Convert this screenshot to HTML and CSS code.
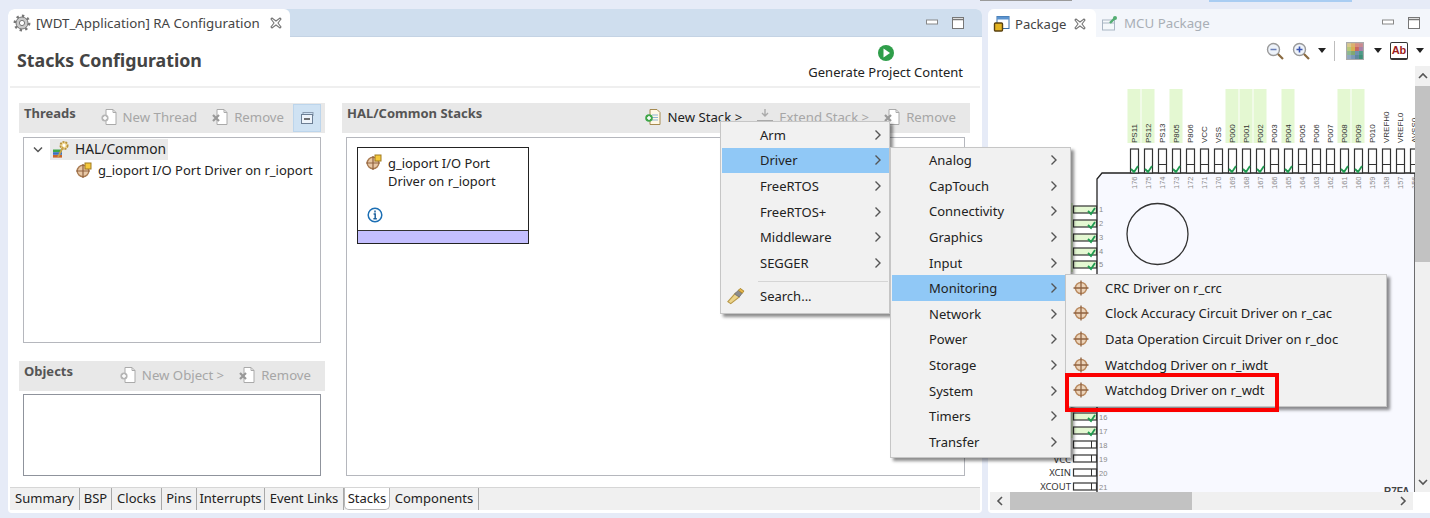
FILE: index.html
```html
<!DOCTYPE html>
<html lang="en">
<head>
<meta charset="utf-8">
<title>RA Configuration</title>
<link rel="stylesheet" href="styles.css">
</head>
<body>
<svg class="defs" width="0" height="0">
  <symbol id="gear" viewBox="0 0 18 18"><circle cx="9" cy="9" r="6" fill="#c9c9c9" stroke="#777" stroke-width="1"/><circle cx="9" cy="9" r="7.2" fill="none" stroke="#777" stroke-width="2.4" stroke-dasharray="2.4 3.2"/><circle cx="9" cy="9" r="2.6" fill="#fff" stroke="#777"/></symbol>
  <symbol id="close" viewBox="0 0 14 14"><path d="M2 3l1-1 4 3 4-3 1 1-3 4 3 4-1 1-4-3-4 3-1-1 3-4z" fill="#fff" stroke="#777" stroke-width="1.1"/></symbol>
  <symbol id="min" viewBox="0 0 14 14"><rect x="1.5" y="4" width="11" height="4" fill="#fff" stroke="#888"/></symbol>
  <symbol id="max" viewBox="0 0 14 14"><rect x="1.5" y="1.5" width="11" height="11" fill="#fff" stroke="#777"/><path d="M1.5 3.500h11" stroke="#777" stroke-width="1.5"/></symbol>
  <symbol id="driver" viewBox="0 0 16 16"><circle cx="8" cy="8" r="5.600" fill="#ecd4ba" stroke="#b98a60" stroke-width="1.500"/><path d="M8 0.500v15M0.500 8h15" stroke="#8f6240" stroke-width="1.300"/></symbol>
  <symbol id="driverq" viewBox="0 0 16 16"><circle cx="7" cy="9" r="5.800" fill="#e8c8a6" stroke="#a87a50" stroke-width="1.400"/><path d="M7 2v14M0 9h14" stroke="#8f6240" stroke-width="1.200"/><rect x="9" y="1" width="6" height="6" fill="#f5c93c" stroke="#a07a20"/></symbol>
  <symbol id="addpage" viewBox="0 0 18 18"><path d="M6 1.500h7l3 3v12H6z" fill="#fff" stroke="#aaa"/><path d="M13 1.500v3h3" fill="none" stroke="#aaa"/><circle cx="5" cy="10" r="3.600" fill="#b5b5b5"/><path d="M5 8v4M3 10h4" stroke="#fff" stroke-width="1.400"/></symbol>
  <symbol id="addpagec" viewBox="0 0 18 18"><path d="M6 1.500h7l3 3v12H6z" fill="#fff8e6" stroke="#a58a50"/><path d="M8 7h6M8 9.500h6M8 12h6" stroke="#8fb4d6"/><circle cx="5" cy="10" r="3.800" fill="#3fa648"/><path d="M5 8v4M3 10h4" stroke="#fff" stroke-width="1.500"/></symbol>
  <symbol id="rmpage" viewBox="0 0 18 18"><path d="M6 1.500h7l3 3v12H6z" fill="#fff" stroke="#aaa"/><path d="M13 1.500v3h3" fill="none" stroke="#aaa"/><path d="M2 7l6 6M8 7l-6 6" stroke="#999" stroke-width="2.200"/></symbol>
  <symbol id="extend" viewBox="0 0 18 18"><path d="M9 1v7M6 5l3 3 3-3" fill="none" stroke="#aaa" stroke-width="1.400"/><path d="M1 13h16" stroke="#aaa" stroke-width="2"/></symbol>
  <symbol id="chev" viewBox="0 0 8 12"><path d="M1.500 1.500L6 6l-4.500 4.500" fill="none" stroke="#555" stroke-width="1.400"/></symbol>
  <symbol id="mag" viewBox="0 0 18 18"><circle cx="7.500" cy="7.500" r="6" fill="#eef3fa" stroke="#9a9a9a" stroke-width="1.400"/><path d="M12 12l5 5" stroke="#8a6a40" stroke-width="2.200"/></symbol>
</svg>

<main class="editor">
  <div class="tabbar">
    <div class="tab tab-active">
      <svg class="i18"><use href="#gear"/></svg>
      <span>[WDT_Application] RA Configuration</span>
      <svg class="i14"><use href="#close"/></svg>
    </div>
    <div class="winbtns">
      <svg class="i14"><use href="#min"/></svg>
      <svg class="i14"><use href="#max"/></svg>
    </div>
  </div>

  <header class="head">
    <h1>Stacks Configuration</h1>
    <div class="generate">
      <svg class="i18" viewBox="0 0 18 18"><circle cx="9" cy="9" r="8" fill="#2f9e4a"/><path d="M6.500 4.500l6.500 4.500-6.500 4.500z" fill="#fff"/></svg>
      <span>Generate Project Content</span>
    </div>
  </header>

  <div class="work">
    <section class="col-left">
      <div class="bar bar-threads">
        <h2>Threads</h2>
        <div class="btns">
          <span class="btn off"><svg class="i18"><use href="#addpage"/></svg>New Thread</span>
          <span class="btn off"><svg class="i18"><use href="#rmpage"/></svg>Remove</span>
          <span class="collapse"><svg viewBox="0 0 14 14" class="i14"><rect x="3" y="1.500" width="10" height="3" fill="none" stroke="#8a9bb0"/><rect x="1.500" y="3.500" width="11" height="9" fill="#eef4fb" stroke="#6d7f95"/><path d="M4 8h6" stroke="#444" stroke-width="1.400"/></svg></span>
        </div>
      </div>
      <div class="box box-tree">
        <div class="tree-row">
          <svg class="twist" viewBox="0 0 10 8"><path d="M1 1.500l4 4 4-4" fill="none" stroke="#555" stroke-width="1.500"/></svg>
          <span class="tree-sel">
            <svg class="i18" viewBox="0 0 18 18"><rect x="1" y="9.500" width="9" height="2.600" fill="#3fa648"/><rect x="1" y="12.200" width="9" height="2.600" fill="#3a6fc0"/><rect x="1" y="15" width="9" height="2.600" fill="#c9662b"/><circle cx="12" cy="5.500" r="3.600" fill="#f4dc9a" stroke="#b8923a" stroke-width="1.800" stroke-dasharray="2 1"/><circle cx="12" cy="5.500" r="1.400" fill="#fff"/><path d="M6 17L11 7" stroke="#c9a24a" stroke-width="1.700"/></svg>
            HAL/Common
          </span>
        </div>
        <div class="tree-row tree-child">
          <svg class="i16"><use href="#driverq"/></svg>
          <span>g_ioport I/O Port Driver on r_ioport</span>
        </div>
      </div>
      <div class="bar bar-objects">
        <h2>Objects</h2>
        <div class="btns">
          <span class="btn off"><svg class="i18"><use href="#addpage"/></svg>New Object &gt;</span>
          <span class="btn off"><svg class="i18"><use href="#rmpage"/></svg>Remove</span>
        </div>
      </div>
      <div class="box box-objects"></div>
    </section>

    <section class="col-right">
      <div class="bar bar-stacks">
        <h2>HAL/Common Stacks</h2>
        <div class="btns">
          <span class="btn"><svg class="i18"><use href="#addpagec"/></svg>New Stack &gt;</span>
          <span class="btn off"><svg class="i18"><use href="#extend"/></svg>Extend Stack &gt;</span>
          <span class="btn off"><svg class="i18"><use href="#rmpage"/></svg>Remove</span>
        </div>
      </div>
      <div class="box box-stacks">
        <article class="card">
          <div class="card-body">
            <svg class="i16"><use href="#driverq"/></svg>
            <p>g_ioport I/O Port<br>Driver on r_ioport</p>
          </div>
          <svg class="info" viewBox="0 0 16 16"><circle cx="8" cy="8" r="6.800" fill="#fff" stroke="#1c6fb4" stroke-width="1.500"/><path d="M8 3.600v1.800M6.600 7h1.600v4.600M6.400 11.800h3.400" fill="none" stroke="#1c5f9c" stroke-width="1.500"/></svg>
          <div class="card-strip"></div>
        </article>
      </div>
    </section>
  </div>

  <nav class="pagetabs">
    <span class="pt">Summary</span>
    <span class="pt">BSP</span>
    <span class="pt">Clocks</span>
    <span class="pt">Pins</span>
    <span class="pt">Interrupts</span>
    <span class="pt">Event Links</span>
    <span class="pt pt-active">Stacks</span>
    <span class="pt">Components</span>
  </nav>
</main>

<aside class="package">
  <div class="tabbar tabbar-light">
    <div class="tab tab-pkg">
      <svg class="i18" viewBox="0 0 18 18"><rect x="4" y="1.500" width="12" height="12" fill="#fff" stroke="#3a6ea5"/><rect x="4" y="1.500" width="12" height="3" fill="#5b93cf"/><rect x="1.500" y="8" width="8" height="8" rx="1" fill="#e3b321" stroke="#5a4210" stroke-width="1.400"/></svg>
      <span>Package</span>
      <svg class="i14"><use href="#close"/></svg>
    </div>
    <div class="tab-other">
      <svg class="i18" viewBox="0 0 18 18"><rect x="1.500" y="6" width="12" height="10" fill="#f4f8fb" stroke="#a9b6c4"/><path d="M1.500 9h12" stroke="#a9b6c4"/><path d="M9 9l5-5" stroke="#54ad73" stroke-width="2.400"/><circle cx="14" cy="4" r="2" fill="#54ad73"/></svg>
      <span>MCU Package</span>
    </div>
    <div class="winbtns winbtns-pkg">
      <svg class="i14"><use href="#min"/></svg>
      <svg class="i14"><use href="#max"/></svg>
    </div>
  </div>

  <div class="pkg-tools">
    <svg class="i18" viewBox="0 0 18 18"><use href="#mag"/><path d="M4.500 7.500h6" stroke="#6a7fb8" stroke-width="1.600"/></svg>
    <svg class="i18" viewBox="0 0 18 18"><use href="#mag"/><path d="M4.500 7.500h6M7.500 4.500v6" stroke="#3b55b0" stroke-width="1.600"/></svg>
    <span class="caret"></span>
    <span class="tool-sep"></span>
    <svg class="i18 grid-ico" viewBox="0 0 16 16"><rect x="0.500" y="0.500" width="15" height="15" fill="#bbb" stroke="#aaa"/><path fill="#d9c98c" d="M1 1h3.500v3.500H1z"/><path fill="#dcb06c" d="M4.500 1H8v3.500H4.500z"/><path fill="#d88c7c" d="M8 1h3.500v3.500H8z"/><path fill="#c88a90" d="M11.500 1H15v3.500h-3.500z"/><path fill="#b9c878" d="M1 4.500h3.500V8H1z"/><path fill="#d8b050" d="M4.500 4.500H8V8H4.500z"/><path fill="#c86860" d="M8 4.500h3.500V8H8z"/><path fill="#a880a8" d="M11.500 4.500H15V8h-3.500z"/><path fill="#8cb890" d="M1 8h3.500v3.500H1z"/><path fill="#80a870" d="M4.500 8H8v3.500H4.500z"/><path fill="#7090b0" d="M8 8h3.500v3.500H8z"/><path fill="#4f9a88" d="M11.500 8H15v3.500h-3.500z"/><path fill="#90a8c0" d="M1 11.500h3.500V15H1z"/><path fill="#7a98b8" d="M4.500 11.500H8V15H4.500z"/><path fill="#5f88a0" d="M8 11.500h3.500V15H8z"/><path fill="#409078" d="M11.500 11.500H15V15h-3.500z"/></svg>
    <span class="caret"></span>
    <span class="abicon">Ab</span>
    <span class="caret"></span>
  </div>

  <div class="pkg-view">
    <div class="pkg-main">
      <svg class="diagram" viewBox="990 66 425 426" width="425" height="426">
        <g class="col-bg">
          <rect x="1127.500" y="89" width="13" height="54" fill="#e4f8d2"/><rect x="1141.500" y="89" width="13" height="54" fill="#e4f8d2"/><rect x="1169.500" y="89" width="13" height="54" fill="#e4f8d2"/><rect x="1225.500" y="89" width="13" height="54" fill="#e4f8d2"/><rect x="1239.500" y="89" width="13" height="54" fill="#e4f8d2"/><rect x="1253.500" y="89" width="13" height="54" fill="#e4f8d2"/><rect x="1281.500" y="89" width="13" height="54" fill="#e4f8d2"/><rect x="1337.500" y="89" width="13" height="54" fill="#e4f8d2"/><rect x="1351.500" y="89" width="13" height="54" fill="#e4f8d2"/>
        </g>
        <path d="M1097 500V179l5-6h313v327z" fill="#f8f9ff" stroke="#222" stroke-width="1.300"/>
        <g fill="#fff" stroke="#333" stroke-width="1.200">
          <rect x="1130.500" y="149" width="8" height="24"/><rect x="1144.500" y="149" width="8" height="24"/><rect x="1158.500" y="149" width="8" height="24"/><rect x="1172.500" y="149" width="8" height="24"/><rect x="1186.500" y="149" width="8" height="24"/><rect x="1200.500" y="149" width="8" height="24"/><rect x="1214.500" y="149" width="8" height="24"/><rect x="1228.500" y="149" width="8" height="24"/><rect x="1242.500" y="149" width="8" height="24"/><rect x="1256.500" y="149" width="8" height="24"/><rect x="1270.500" y="149" width="8" height="24"/><rect x="1284.500" y="149" width="8" height="24"/><rect x="1298.500" y="149" width="8" height="24"/><rect x="1312.500" y="149" width="8" height="24"/><rect x="1326.500" y="149" width="8" height="24"/><rect x="1340.500" y="149" width="8" height="24"/><rect x="1354.500" y="149" width="8" height="24"/><rect x="1368.500" y="149" width="8" height="24"/><rect x="1382.500" y="149" width="8" height="24"/><rect x="1396.500" y="149" width="8" height="24"/><rect x="1410.500" y="149" width="8" height="24"/>
        </g>
        <path d="M1158.500 164.500h8M1186.500 164.500h8M1200.500 164.500h8M1214.500 164.500h8M1270.500 164.500h8M1298.500 164.500h8M1312.500 164.500h8M1326.500 164.500h8M1368.500 164.500h8M1382.500 164.500h8M1396.500 164.500h8M1410.500 164.500h8" stroke="#333" fill="none"/>
        <path d="M1131 169l3 3 4-6M1145 169l3 3 4-6M1173 169l3 3 4-6M1229 169l3 3 4-6M1243 169l3 3 4-6M1257 169l3 3 4-6M1285 169l3 3 4-6M1341 169l3 3 4-6M1355 169l3 3 4-6" stroke="#1f9a50" stroke-width="1.800" fill="none"/>
        <g class="pin-name">
          <text transform="translate(1136.500 143) rotate(-90)">PS11</text><text transform="translate(1150.500 143) rotate(-90)">PS12</text><text transform="translate(1164.500 143) rotate(-90)">PS13</text><text transform="translate(1178.500 143) rotate(-90)">P805</text><text transform="translate(1192.500 143) rotate(-90)">P806</text><text transform="translate(1206.500 143) rotate(-90)">VCC</text><text transform="translate(1220.500 143) rotate(-90)">VSS</text><text transform="translate(1234.500 143) rotate(-90)">P000</text><text transform="translate(1248.500 143) rotate(-90)">P001</text><text transform="translate(1262.500 143) rotate(-90)">P002</text><text transform="translate(1276.500 143) rotate(-90)">P003</text><text transform="translate(1290.500 143) rotate(-90)">P004</text><text transform="translate(1304.500 143) rotate(-90)">P005</text><text transform="translate(1318.500 143) rotate(-90)">P006</text><text transform="translate(1332.500 143) rotate(-90)">P007</text><text transform="translate(1346.500 143) rotate(-90)">P008</text><text transform="translate(1360.500 143) rotate(-90)">P009</text><text transform="translate(1374.500 143) rotate(-90)">P010</text><text transform="translate(1388.500 143) rotate(-90)">VREFH0</text><text transform="translate(1402.500 143) rotate(-90)">VREFL0</text><text transform="translate(1416.500 143) rotate(-90)">AVSS0</text>
        </g>
        <g class="pin-num">
          <text transform="translate(1136.500 189) rotate(-90)">176</text><text transform="translate(1150.500 189) rotate(-90)">175</text><text transform="translate(1164.500 189) rotate(-90)">174</text><text transform="translate(1178.500 189) rotate(-90)">173</text><text transform="translate(1192.500 189) rotate(-90)">172</text><text transform="translate(1206.500 189) rotate(-90)">171</text><text transform="translate(1220.500 189) rotate(-90)">170</text><text transform="translate(1234.500 189) rotate(-90)">169</text><text transform="translate(1248.500 189) rotate(-90)">168</text><text transform="translate(1262.500 189) rotate(-90)">167</text><text transform="translate(1276.500 189) rotate(-90)">166</text><text transform="translate(1290.500 189) rotate(-90)">165</text><text transform="translate(1304.500 189) rotate(-90)">164</text><text transform="translate(1318.500 189) rotate(-90)">163</text><text transform="translate(1332.500 189) rotate(-90)">162</text><text transform="translate(1346.500 189) rotate(-90)">161</text><text transform="translate(1360.500 189) rotate(-90)">160</text><text transform="translate(1374.500 189) rotate(-90)">159</text><text transform="translate(1388.500 189) rotate(-90)">158</text><text transform="translate(1402.500 189) rotate(-90)">157</text><text transform="translate(1416.500 189) rotate(-90)">156</text>
        </g>
        <circle cx="1157.500" cy="234" r="30.500" fill="none" stroke="#333" stroke-width="1.300"/>
        <g>
          <rect x="1014" y="203" width="59" height="69" fill="#e4f8d2"/><rect x="1014" y="410" width="59" height="28" fill="#e4f8d2"/><rect x="1014" y="438" width="59" height="54" fill="#fff"/>
        </g>
        <g fill="#e4f8d2" stroke="#333" stroke-width="1.200">
          <rect x="1073.500" y="206" width="23" height="7"/><rect x="1073.500" y="220" width="23" height="7"/><rect x="1073.500" y="234" width="23" height="7"/><rect x="1073.500" y="248" width="23" height="7"/><rect x="1073.500" y="261" width="23" height="7"/><rect x="1073.500" y="413" width="23" height="7"/><rect x="1073.500" y="427" width="23" height="7"/>
        </g>
        <g fill="#fff" stroke="#333" stroke-width="1.200">
          <rect x="1073.500" y="441" width="23" height="7"/><rect x="1073.500" y="455" width="23" height="7"/><rect x="1073.500" y="469" width="23" height="7"/><rect x="1073.500" y="483" width="23" height="7"/>
        </g>
        <path d="M1091.500 441v7M1091.500 455v7M1091.500 469v7M1091.500 483v7" stroke="#333"/>
        <path d="M1088 211l3 3 4-6M1088 225l3 3 4-6M1088 239l3 3 4-6M1088 253l3 3 4-6M1088 266l3 3 4-6M1088 418l3 3 4-6M1088 432l3 3 4-6" stroke="#1f9a50" stroke-width="1.800" fill="none"/>
        <g class="pin-num">
          <text x="1099" y="212">1</text><text x="1099" y="226">2</text><text x="1099" y="240">3</text><text x="1099" y="254">4</text><text x="1099" y="267">5</text><text x="1099" y="420">16</text><text x="1099" y="434">17</text><text x="1099" y="448">18</text><text x="1099" y="462">19</text><text x="1099" y="476">20</text><text x="1099" y="490">21</text>
        </g>
        <g class="pin-side">
          <text x="1071" y="463">VCC</text><text x="1071" y="476">XCIN</text><text x="1071" y="490">XCOUT</text>
        </g>
        <text class="chip-name" x="1384" y="495">R7FA</text>
      </svg>
      <div class="vscroll">
        <svg class="sb-arrow" viewBox="0 0 12 8"><path d="M2 6l4-4 4 4" fill="none" stroke="#555" stroke-width="1.600"/></svg>
        <div class="vthumb"></div>
        <svg class="sb-arrow sb-down" viewBox="0 0 12 8"><path d="M2 2l4 4 4-4" fill="none" stroke="#555" stroke-width="1.600"/></svg>
      </div>
    </div>
    <div class="hscroll">
      <svg class="sb-h" viewBox="0 0 8 12"><path d="M6 2L2 6l4 4" fill="none" stroke="#555" stroke-width="1.600"/></svg>
      <div class="hthumb"></div>
      <svg class="sb-h" viewBox="0 0 8 12"><path d="M2 2l4 4-4 4" fill="none" stroke="#555" stroke-width="1.600"/></svg>
    </div>
  </div>
</aside>

<div class="topbits"><span class="tb-line"></span><span class="tb-blue"></span></div>

<div class="menu menu-1">
  <div class="mi">Arm<svg class="chev"><use href="#chev"/></svg></div>
  <div class="mi mi-hot">Driver<svg class="chev"><use href="#chev"/></svg></div>
  <div class="mi">FreeRTOS<svg class="chev"><use href="#chev"/></svg></div>
  <div class="mi">FreeRTOS+<svg class="chev"><use href="#chev"/></svg></div>
  <div class="mi">Middleware<svg class="chev"><use href="#chev"/></svg></div>
  <div class="mi">SEGGER<svg class="chev"><use href="#chev"/></svg></div>
  <div class="msep"></div>
  <div class="mi mi-search"><svg class="mi-ico search-ico" viewBox="0 0 20 18"><path d="M2 15l8-9 4 4-9 7z" fill="#ecd48a" stroke="#b89848" stroke-width="1.200"/><path d="M9 7l4-4 4 3-3 4z" fill="#8c8c8c" stroke="#777"/><path d="M13 3l2-2 4 3-2 2z" fill="#e8b64a" stroke="#a88428"/></svg>Search...</div>
</div>

<div class="menu menu-2">
  <div class="mi">Analog<svg class="chev"><use href="#chev"/></svg></div>
  <div class="mi">CapTouch<svg class="chev"><use href="#chev"/></svg></div>
  <div class="mi">Connectivity<svg class="chev"><use href="#chev"/></svg></div>
  <div class="mi">Graphics<svg class="chev"><use href="#chev"/></svg></div>
  <div class="mi">Input<svg class="chev"><use href="#chev"/></svg></div>
  <div class="mi mi-hot">Monitoring<svg class="chev"><use href="#chev"/></svg></div>
  <div class="mi">Network<svg class="chev"><use href="#chev"/></svg></div>
  <div class="mi">Power<svg class="chev"><use href="#chev"/></svg></div>
  <div class="mi">Storage<svg class="chev"><use href="#chev"/></svg></div>
  <div class="mi">System<svg class="chev"><use href="#chev"/></svg></div>
  <div class="mi">Timers<svg class="chev"><use href="#chev"/></svg></div>
  <div class="mi">Transfer<svg class="chev"><use href="#chev"/></svg></div>
</div>

<div class="menu menu-3">
  <div class="mi"><svg class="mi-ico"><use href="#driver"/></svg>CRC Driver on r_crc</div>
  <div class="mi"><svg class="mi-ico"><use href="#driver"/></svg>Clock Accuracy Circuit Driver on r_cac</div>
  <div class="mi"><svg class="mi-ico"><use href="#driver"/></svg>Data Operation Circuit Driver on r_doc</div>
  <div class="mi"><svg class="mi-ico"><use href="#driver"/></svg>Watchdog Driver on r_iwdt</div>
  <div class="mi"><svg class="mi-ico"><use href="#driver"/></svg>Watchdog Driver on r_wdt</div>
</div>
<div class="redbox"></div>
</body>
</html>
```

FILE: styles.css
```css
* { box-sizing: border-box; }
html, body { margin: 0; height: 100%; }
body {
  position: relative;
  width: 1430px;
  height: 518px;
  overflow: hidden;
  display: flex;
  gap: 6px;
  padding: 9px 0 5px 8px;
  background: #e6ebf7;
  font-family: "Noto Sans", "Open Sans", sans-serif;
  font-size: 13px;
  color: #333;
}
.defs { position: absolute; }
.i18 { width: 18px; height: 18px; flex: none; }
.i16 { width: 16px; height: 16px; flex: none; }
.i14 { width: 14px; height: 14px; flex: none; }

/* editor */
.editor {
  width: 974px;
  display: flex;
  flex-direction: column;
  background: #fff;
  border-radius: 6px 6px 4px 4px;
  overflow: hidden;
}
.tabbar {
  height: 28px;
  flex: none;
  display: flex;
  align-items: stretch;
  background: #cfdeee;
  border-bottom: 1px solid #c4d3e4;
}
.tab {
  display: flex;
  align-items: center;
  background: #fff;
  border-radius: 6px 6px 0 0;
  margin-bottom: -1px;
}
.tab-active { width: 282px; padding-left: 5px; gap: 5px; font-size: 13.3px; color: #444; }
.tab-active span { width: 228px; white-space: nowrap; }
.winbtns { margin-left: auto; display: flex; align-items: center; gap: 12px; padding-right: 17px; }
.head {
  height: 51px;
  flex: none;
  margin: 0 2px;
  padding: 7px 17px 0 7px;
  display: flex;
  justify-content: space-between;
  align-items: flex-start;
  border-bottom: 2px solid #efefef;
}
h1 { margin: 4px 0 0; font-size: 17.8px; font-weight: 700; color: #444; line-height: 24px; }
.generate { display: flex; flex-direction: column; align-items: center; gap: 1px; line-height: 18px; color: #222; font-size: 13px; }
.work {
  flex: 1;
  display: flex;
  gap: 17px;
  padding: 15px 12px 0 11px;
}
.col-left { width: 306px; display: flex; flex-direction: column; }
.col-right { width: 628px; display: flex; flex-direction: column; }
.bar {
  height: 30px;
  flex: none;
  display: flex;
  background: #e8e8e8;
  padding-left: 5px;
}
h2 { margin: 0; font-size: 13px; font-weight: 700; color: #555; line-height: 20px; }
.btns { margin-left: auto; display: flex; align-items: center; padding-bottom: 2px; }
.btn { display: inline-flex; align-items: center; gap: 5px; color: #222; font-size: 13.2px; white-space: nowrap; margin-right: 14px; }
.btn.off { color: #a6a6a6; }
.bar-threads .btns { margin-right: 4px; padding-bottom: 0; }
.bar-threads .btn { position: relative; top: -1px; }
.bar-threads .btn:nth-child(2) { margin-right: 9px; }
.collapse { width: 28px; height: 28px; display: flex; align-items: center; justify-content: center; background: #cfe2f3; border: 1px solid #bcd5ec; }
.box { background: #fff; border: 1px solid #b5b7bd; margin: 4px 4px 0; }
.box-tree { height: 206px; flex: none; margin-bottom: 18px; padding-top: 1px; }
.box-objects { height: 82px; flex: none; margin-top: 3px; border-color: #8f939c; }
.box-stacks { height: 339px; flex: none; padding: 9px 10px; margin-right: 5px; }
.tree-row { display: flex; align-items: center; height: 21px; white-space: nowrap; color: #222; }
.twist { width: 10px; height: 8px; margin: 0 7px 0 9px; flex: none; }
.tree-sel { display: flex; align-items: center; gap: 5px; background: #e9e9e9; height: 21px; padding: 0 2px 2px; font-size: 13.8px; line-height: 19px; }
.tree-child { padding-left: 52px; gap: 6px; height: 20px; }
.tree-child span { font-size: 13px; }
.card {
  width: 172px;
  height: 97px;
  border: 1.5px solid #222;
  position: relative;
  display: flex;
  flex-direction: column;
  background: #fff;
}
.card-body { display: flex; gap: 6px; padding: 6px 0 0 8px; }
.card-body p { margin: 0; font-size: 12.9px; line-height: 18px; color: #222; }
.info { width: 16px; height: 16px; margin: auto 0 7px 9px; }
.card-strip { height: 13px; background: #c4bfff; border-top: 1px solid #333; flex: none; }

.pagetabs {
  height: 23px;
  flex: none;
  margin: 0 2px 3px;
  display: grid;
  grid-template-columns: 70px 32px 50px 35px 68px 79px 46px 89px 1fr;
  background: #f0f0f0;
  border-top: 1px solid #d6d6d6;
}
.pt { text-align: center; border-right: 1px solid #a8a8a8; font-size: 13px; color: #222; line-height: 21px; white-space: nowrap; }
.pt-active { background: #fff; border-radius: 0 0 5px 5px; border: 1px solid #b8b8b8; border-top: none; }

/* package */
.package { flex: 1; display: flex; flex-direction: column; background: #fff; border-radius: 6px 0 0 4px; overflow: hidden; }
.tabbar-light { background: #f3f6fb; border-bottom: none; }
.tab-pkg { width: 108px; padding-left: 5px; gap: 4px; font-size: 13.1px; color: #444; }
.tab-pkg .i14 { margin-left: 3px; }
.tab-other { display: flex; align-items: center; gap: 5px; padding-left: 5px; font-size: 13.3px; color: #a9afb6; }
.winbtns-pkg { padding-right: 9px; }
.pkg-tools { height: 29px; flex: none; display: flex; align-items: center; justify-content: flex-end; padding: 0 6px 2px 0; gap: 8px; }
.caret { width: 0; height: 0; border-left: 4.5px solid transparent; border-right: 4.5px solid transparent; border-top: 5px solid #222; }
.tool-sep { width: 1px; height: 20px; background: #bdbdbd; }
.grid-ico { margin: 0 2px 0 3px; }
.abicon { width: 18px; height: 18px; border: 1px solid #333; border-bottom-width: 2px; border-radius: 2px; background: #fff; color: #9c1c1c; font: 700 11px/15px "Liberation Sans", sans-serif; text-align: center; }
.pkg-view { flex: 1; display: flex; flex-direction: column; padding: 0 0 3px 2px; min-height: 0; }
.pkg-main { display: flex; height: 426px; flex: none; }
.diagram { display: block; flex: none; }
.pin-name text { font: 8px "Liberation Sans", sans-serif; fill: #333; }
.pin-num text { font: 7.5px "Liberation Sans", sans-serif; fill: #8a8a8a; }
.pin-side text { font: 9.5px "Noto Sans", sans-serif; fill: #333; text-anchor: end; }
.chip-name { font: 700 10px "Liberation Sans", sans-serif; fill: #444; }
.vscroll { width: 15px; flex: none; background: #f0f0f0; display: flex; flex-direction: column; align-items: center; }
.sb-arrow { width: 12px; height: 8px; margin: 6px 0; flex: none; }
.vthumb { width: 15px; height: 176px; background: #c2c2c2; }
.sb-down { margin-top: auto; margin-bottom: 6px; }
.hscroll { height: 18px; flex: none; margin-right: 17px; background: #f0f0f0; display: flex; align-items: center; }
.sb-h { width: 8px; height: 12px; flex: none; margin: 0 6px; }
.hthumb { width: 182px; height: 18px; background: #c2c2c2; margin-right: auto; }

.topbits { position: absolute; left: 980px; top: 0; width: 450px; height: 8px; }
.tb-line { position: absolute; left: 0; top: 0; width: 92px; height: 1px; background: #9a9a9a; }
.tb-blue { position: absolute; left: 229px; top: 0; width: 143px; height: 2px; background: #a9cdf2; }

/* menus */
.menu {
  position: absolute;
  background: #f1f1f1;
  border: 1px solid #c6c6c6;
  padding: 0 1px;
  box-shadow: 3px 3px 3px rgba(0,0,0,.45);
}
.menu-1 { left: 720px; top: 121px; width: 170px; height: 193px; }
.menu-2 { left: 890px; top: 146.5px; width: 181px; height: 311.5px; }
.menu-3 { left: 1065px; top: 274px; width: 322px; height: 133px; }
.mi {
  height: 25.6px;
  display: flex;
  align-items: center;
  position: relative;
  color: #222;
  font-size: 13px;
  white-space: nowrap;
}
.menu-1 .mi { padding-left: 38px; margin-right: -1px; }
.menu-2 .mi { padding-left: 37px; margin-right: 4px; }
.mi-hot { background: #90c8f6; }
.chev { width: 8px; height: 12px; margin-left: auto; margin-right: 7px; flex: none; }
.msep { height: 1px; background: #d5d5d5; margin: 5px 0 2px 36px; }
.mi-ico { width: 16px; height: 16px; flex: none; }
.menu-1 .mi-search { padding-left: 4px; gap: 15px; }
.search-ico { width: 19px; height: 18px; }
.menu-3 .mi-ico { margin: 0 16px 0 6px; }
.redbox {
  position: absolute;
  left: 1065px;
  top: 373px;
  width: 214px;
  height: 39px;
  border: 4px solid #fb0000;
}
```
